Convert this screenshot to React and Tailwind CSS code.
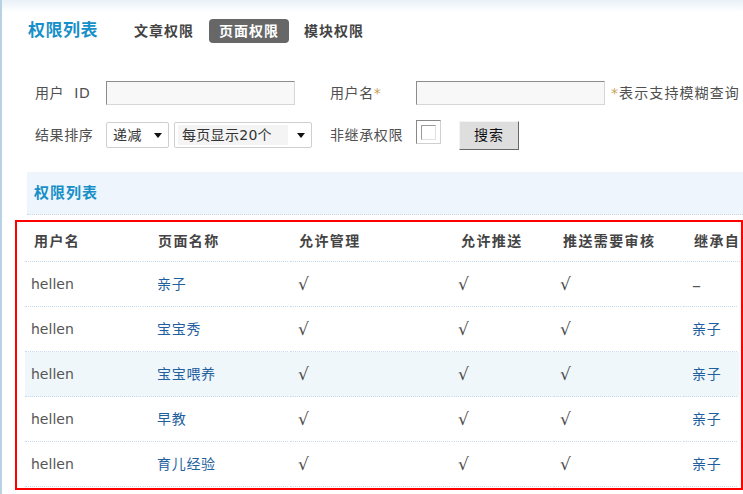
import React from "react";

const rows = [
  { user: "hellen", page: "亲子", from: "–" },
  { user: "hellen", page: "宝宝秀", from: "亲子" },
  { user: "hellen", page: "宝宝喂养", from: "亲子", hl: true },
  { user: "hellen", page: "早教", from: "亲子" },
  { user: "hellen", page: "育儿经验", from: "亲子" },
];

const cell = "border-b border-dotted border-[#c6dcee] mr-[2px] flex items-center whitespace-nowrap";
const check = "text-[17px] text-[#4a4a4a] pt-[2px]";

const Arrow = () => (
  <svg width="8" height="5" viewBox="0 0 8 5" className="shrink-0">
    <path d="M0 0h8L4 5z" fill="#111" />
  </svg>
);

export default function App() {
  return (
    <div
      className="w-[743px] h-[494px] overflow-hidden border-l-2 border-[#b7d3e3] bg-[linear-gradient(to_bottom,#e9f1f7,#ffffff_12px)] text-[14px] text-[#505050]"
      style={{ fontFamily: '"DejaVu Sans", "Noto Sans CJK SC", sans-serif' }}
    >
      {/* Tabs */}
      <div className="flex items-center h-[24px] mt-[19px] pl-[26px]">
        <span className="text-[17px] font-semibold text-[#1790c8] tracking-[0.5px]">权限列表</span>
        <div className="flex items-center gap-[5px] ml-[26px]">
          <span className="px-[10px] h-[24px] flex items-center font-bold tracking-[1px] text-[#444]">文章权限</span>
          <span className="px-[10px] h-[24px] flex items-center font-bold tracking-[1px] text-white bg-[#676767] rounded-[4px]">页面权限</span>
          <span className="px-[10px] h-[24px] flex items-center font-bold tracking-[1px] text-[#444]">模块权限</span>
        </div>
      </div>

      {/* Search form */}
      <div className="pl-[33px] mt-[38px] whitespace-nowrap tracking-[0.6px]">
        <div className="flex items-center h-[24px]">
          <span className="w-[71px]">用户&nbsp; ID</span>
          <div className="w-[189px] h-[24px] bg-[#f8f8f8] border border-[#8c8c8c] border-r-[#d6d6d6] border-b-[#d6d6d6]" />
          <span className="w-[86px] ml-[35px]">
            用户名<span className="text-[#c9a159]">*</span>
          </span>
          <div className="w-[189px] h-[24px] bg-[#f8f8f8] border border-[#8c8c8c] border-r-[#d6d6d6] border-b-[#d6d6d6]" />
          <span className="ml-[6px] tracking-[1.1px]">
            <span className="text-[#c9a159]">*</span>表示支持模糊查询
          </span>
        </div>
        <div className="flex items-center h-[30px] mt-[15px]">
          <span className="w-[71px]">结果排序</span>
          <div className="w-[63px] h-[26px] border border-[#cfcfcf] rounded-[2px] bg-white flex items-center justify-between pl-[6px] pr-[6px]">
            <span className="text-[#333]">递减</span>
            <Arrow />
          </div>
          <div className="w-[138px] h-[26px] ml-[5px] border border-[#cfcfcf] rounded-[2px] bg-white flex items-center justify-between pl-[3px] pr-[6px]">
            <span className="w-[110px] h-[20px] bg-[#f4f4f4] flex items-center pl-[4px] text-[#333] tracking-[0.3px]">每页显示20个</span>
            <Arrow />
          </div>
          <span className="w-[86px] ml-[18px]">非继承权限</span>
          <div className="w-[25px] h-[24px] border border-[#888] border-r-[#d0d0d0] border-b-[#d0d0d0] bg-white flex items-center justify-center mt-[-6px]">
            <div className="w-[15px] h-[15px] border border-[#9a9a9a] border-r-[#e0e0e0] border-b-[#e0e0e0] bg-white" />
          </div>
          <button className="w-[60px] h-[29px] ml-[18px] bg-[#dedede] border border-[#f4f4f4] border-r-[#666] border-b-[#666] text-[#111] flex items-center justify-center tracking-[1px]">
            搜索
          </button>
        </div>
      </div>

      {/* Section header */}
      <div className="ml-[25px] mt-[22px] h-[43px] bg-[#eef5fc] border-b border-dotted border-[#cfd9e4] flex items-center pl-[7px]">
        <span className="font-bold text-[15px] tracking-[1px] text-[#1790c8]">权限列表</span>
      </div>

      {/* Table */}
      <div className="ml-[13px] mt-[5px] w-[728px] h-[270px] border-2 border-[#ff0000] pl-[8px] pr-[2px]">
        <div className="grid grid-cols-[118px_147px_162px_101px_130px_1fr] h-[40px] font-bold text-[#444] tracking-[1.4px]">
          <div className={`${cell} pl-[9px]`}>用户名</div>
          <div className={`${cell} pl-[15px]`}>页面名称</div>
          <div className={`${cell} pl-[9px]`}>允许管理</div>
          <div className={`${cell} pl-[9px]`}>允许推送</div>
          <div className={`${cell} pl-[10px]`}>推送需要审核</div>
          <div className={`${cell} pl-[11px]`}>继承自</div>
        </div>
        {rows.map((r, i) => (
          <div
            key={i}
            className={`grid grid-cols-[118px_147px_162px_101px_130px_1fr] h-[45px] tracking-[0.7px] ${r.hl ? "bg-[#f0f7fb]" : ""}`}
          >
            <div className={`${cell} pl-[6px] text-[#555] tracking-normal`}>{r.user}</div>
            <div className={`${cell} pl-[14px] text-[#1f5f9e]`}>{r.page}</div>
            <div className={`${cell} pl-[8px]`}><span className={check}>√</span></div>
            <div className={`${cell} pl-[6px]`}><span className={check}>√</span></div>
            <div className={`${cell} pl-[7px]`}><span className={check}>√</span></div>
            <div className={`${cell} pl-[9px] ${r.from === "–" ? "text-[#555]" : "text-[#1f5f9e]"}`}>
              {r.from === "–" ? <span className="text-[18px]">–</span> : r.from}
            </div>
          </div>
        ))}
      </div>
    </div>
  );
}
